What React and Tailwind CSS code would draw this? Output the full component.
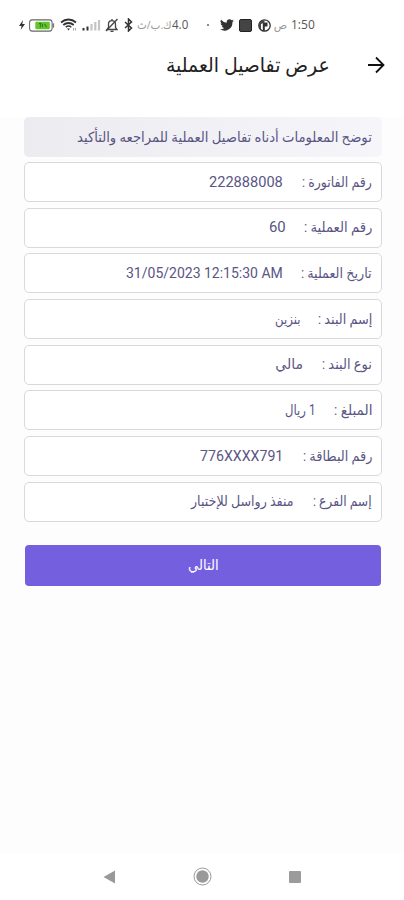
import React, { useLayoutEffect, useRef, useState } from "react";

const rows = [
  { label: "رقم الفاتورة :", labelWidth: 70, value: "222888008", valueWidth: 74, gap: 19 },
  { label: "رقم العملية :", labelWidth: 68, value: "60", valueWidth: 17, gap: 18 },
  { label: "تاريخ العملية :", labelWidth: 71, value: "31/05/2023 12:15:30 AM", valueWidth: 157, gap: 18 },
  { label: "إسم البند :", labelWidth: 54, value: "بنزين", valueWidth: 25, gap: 18 },
  { label: "نوع البند :", labelWidth: 50, value: "مالي", valueWidth: 28, gap: 19 },
  { label: "المبلغ :", labelWidth: 38, value: "1 ريال", valueWidth: 30, gap: 19 },
  { label: "رقم البطاقة :", labelWidth: 69, value: "776XXXX791", valueWidth: 83, gap: 20 },
  { label: "إسم الفرع :", labelWidth: 59, value: "منفذ رواسل للإختبار", valueWidth: 103, gap: 19 },
];

// One line of text, squeezed or stretched to the given width
const FitText = ({ width, dir = "rtl", className = "", children }) => {
  const ref = useRef(null);
  const [scale, setScale] = useState(1);

  useLayoutEffect(() => {
    setScale(width / ref.current.offsetWidth);
  }, [width]);

  return (
    <span
      dir={dir}
      className={`flex shrink-0 whitespace-nowrap ${className}`}
      style={{ width }}
    >
      <span
        ref={ref}
        className={`block shrink-0 ${dir === "rtl" ? "origin-right" : "origin-left"}`}
        style={{ transform: `scaleX(${scale})` }}
      >
        {children}
      </span>
    </span>
  );
};

const StatusBar = () => (
  <div
    dir="ltr"
    className="flex h-[50px] items-center pl-[18px] font-['Open_Sans','DejaVu_Sans',sans-serif] text-[13px] text-[#555]"
  >
    <svg className="h-3 w-2 shrink-0" viewBox="0 0 8 12">
      <path d="M5 1 1 7h2.6L2.6 11 7 5H4.3z" fill="#333" />
    </svg>
    <svg className="ml-[3px] h-[13px] w-[26px] shrink-0" viewBox="0 0 26 12" preserveAspectRatio="none">
      <rect x=".6" y=".8" width="22.5" height="10.4" rx="2.6" fill="#fff" stroke="#666" />
      <path d="M24.3 4v4" stroke="#777" strokeWidth="1.6" />
      <rect x="6.3" y="2.6" width="14.5" height="6.8" rx="1" fill="#62c52d" />
      <path d="M10 4.3h2L11 8M13.5 4.5v3M15.5 4.5l2 3" fill="none" stroke="#2f7d16" />
    </svg>
    <svg className="ml-[5px] h-[14px] w-[18px] shrink-0" viewBox="0 0 18 14" fill="none" stroke="#333">
      <path d="M1 4.5c4.5-4 10.5-4 15 0" strokeWidth="1.8" />
      <path d="M3.3 7c3-2.7 7.4-2.7 10.4 0" strokeWidth="1.8" />
      <path d="M5.7 9.2c1.8-1.5 4-1.5 5.6 0" strokeWidth="1.5" />
      <path d="M7 10.5h3l-1.5 2z" fill="#333" stroke="none" />
      <path d="M13.5 10v2.5M15.5 12.5V10" stroke="#999" strokeWidth=".9" />
    </svg>
    <svg className="ml-1 h-3 w-[19px] shrink-0" viewBox="0 0 19 12">
      <path d="M1.5 9v2.5M5.5 7.500v4" stroke="#333" strokeWidth="2" />
      <path d="M9.5 5v6.5M13.3 3v8.5M17 1v10.5" stroke="#c4c4c4" strokeWidth="2.2" />
    </svg>
    <svg className="ml-1 h-[15px] w-[14px] shrink-0" viewBox="0 0 14 15" fill="none" stroke="#444" strokeWidth="1.3">
      <path d="M2 11.5h10l-1.5-2V6c0-4.5-7-4.5-7 0v3.5zM5.5 13.3h3M7 1v1.5" />
      <path d="M12.5 1 1 13" />
    </svg>
    <svg className="ml-[5px] h-[14px] w-[9px] shrink-0" viewBox="0 0 9 14" fill="none" stroke="#333" strokeWidth="1.5">
      <path d="m1 4 6.5 6L4.500 13V1l3 3L1 10" />
    </svg>
    <FitText width={35} className="ml-[4px] text-[11px] text-[#999]">
      ك.ب/ث
    </FitText>
    <FitText width={16} dir="ltr">
      4.0
    </FitText>
    <span className="ml-[19px] size-[2px] shrink-0 rounded-full bg-[#666]" />
    <svg className="ml-[11px] h-3 w-[14px] shrink-0" viewBox="0 0 24 20">
      <path
        d="M23.6 2.6a9 9 0 0 1-2.7.8A4.8 4.8 0 0 0 23 .7a9.5 9.5 0 0 1-3 1.2 4.8 4.8 0 0 0-8.3 4.400A13.6 13.6 0 0 1 1.8 1.2a4.8 4.8 0 0 0 1.5 6.5 4.700 4.700 0 0 1-2.2-.6 4.8 4.8 0 0 0 3.9 4.700 4.700 4.700 0 0 1-2.2.1 4.8 4.8 0 0 0 4.5 3.4A9.700 9.700 0 0 1 .3 17.400a13.6 13.6 0 0 0 21-12.2 9.700 9.700 0 0 0 2.300-2.6z"
        fill="#333"
      />
    </svg>
    <span className="ml-[5px] size-[13px] shrink-0 rounded-[2px] border border-[#222] bg-[#444]" />
    <svg className="ml-[6px] size-[13px] shrink-0" viewBox="0 0 13 13">
      <circle cx="6.5" cy="6.5" r="5.7" fill="#fff" stroke="#333" strokeWidth="1.3" />
      <path d="M4.800 12V3.500h4.700v4H6.800v4.800z" fill="#333" />
      <path d="M1 4.500C2 2 4 1 6.500 1v2.500L3 5v6C1 9 .5 7 1 4.500z" fill="#444" />
    </svg>
    <FitText width={13} className="ml-[3px] text-[11px] text-[#999]">
      ص
    </FitText>
    <FitText width={24} dir="ltr" className="ml-[4px]">
      1:50
    </FitText>
  </div>
);

const Header = () => (
  <header className="flex h-[30px] items-center pr-[19px] text-[#222]">
    <svg className="h-[18px] w-[18px]" viewBox="0 0 18 18" fill="none" stroke="#111" strokeWidth="1.8">
      <path d="M1 9h15M9 1.500 16.500 9 9 16.500" />
    </svg>
    <h1 className="mr-[37px] text-[20px]">
      <FitText width={164}>عرض تفاصيل العملية</FitText>
    </h1>
  </header>
);

const NavBar = () => (
  <nav dir="ltr" className="flex h-[47px] items-center bg-white pl-[103px]">
    <svg className="h-[14px] w-[13px]" viewBox="0 0 13 14">
      <path d="M12 .5v13L.5 7z" fill="#999" />
    </svg>
    <svg className="ml-[77px] size-[19px]" viewBox="0 0 19 19">
      <circle cx="9.5" cy="9.5" r="8.5" fill="#fff" stroke="#999" />
      <circle cx="9.5" cy="9.5" r="6.2" fill="#999" />
    </svg>
    <span className="ml-[77px] size-3 rounded-[1px] bg-[#9b9b9b]" />
  </nav>
);

const App = () => (
  <div
    dir="rtl"
    className="flex h-[900px] w-[404px] flex-col overflow-hidden bg-[#fdfdfd] font-['Open_Sans','DejaVu_Sans',sans-serif]"
  >
    <div className="h-[117px] bg-white">
      <StatusBar />
      <Header />
    </div>
    <main className="flex-1 pr-[22px] pl-6 font-['Roboto','DejaVu_Sans',sans-serif] text-[14px] text-[#5a5584]">
      <div className="flex h-10 items-center rounded-[5px] bg-linear-to-r from-[#ebebf0] to-[#f6f6fa] px-[10px]">
        <FitText width={295}>
          توضح المعلومات أدناه تفاصيل العملية للمراجعه والتأكيد
        </FitText>
      </div>
      <div className="mt-[5px] flex flex-col gap-[5.7px]">
        {rows.map((row) => (
          <div
            key={row.label}
            className="flex h-10 items-center rounded-[5px] border border-[#d9d9dd] bg-white px-[9px]"
          >
            <FitText width={row.labelWidth}>{row.label}</FitText>
            <span style={{ width: row.gap }} />
            <FitText
              width={row.valueWidth}
              dir={/^[0-9].*[0-9M]$/.test(row.value) ? "ltr" : "rtl"}
            >
              {row.value}
            </FitText>
          </div>
        ))}
      </div>
      <button className="mx-auto mt-[23px] flex h-[41px] w-[356px] items-center justify-center rounded-[4px] bg-[#7460df] text-white">
        <FitText width={31}>التالي</FitText>
      </button>
    </main>
    <NavBar />
  </div>
);

export default App;
